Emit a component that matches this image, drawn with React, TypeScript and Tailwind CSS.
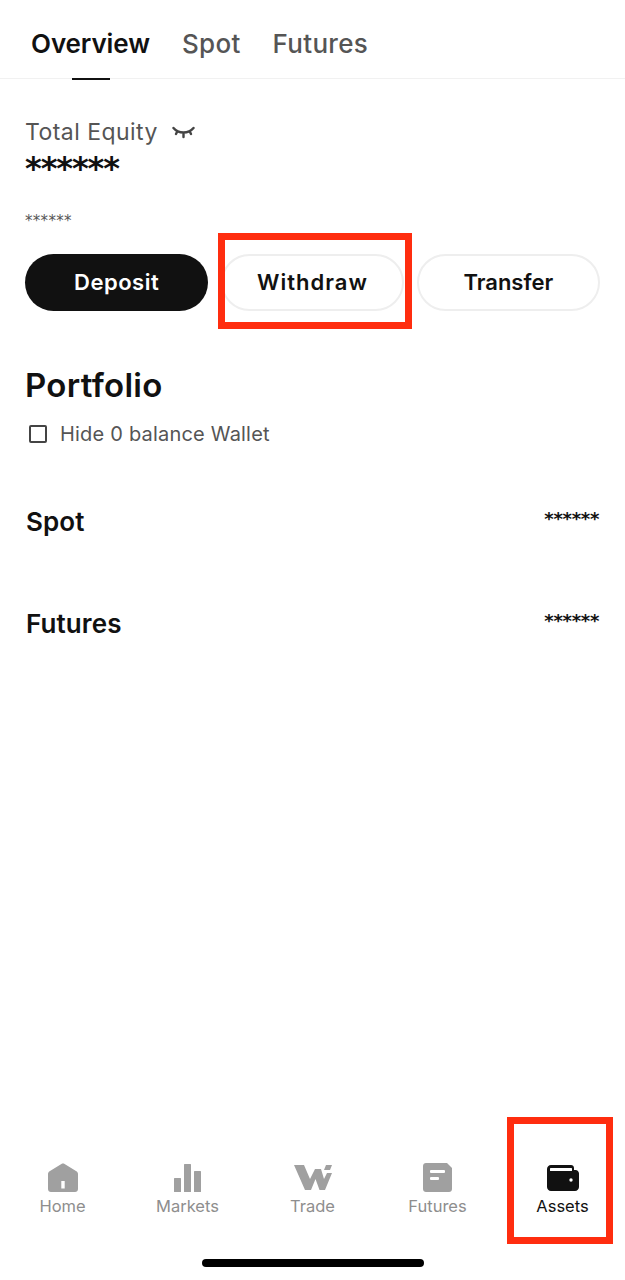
const tabs = ['Overview', 'Spot', 'Futures'];

const wallets = ['Spot', 'Futures'];

function HomeIcon() {
  return (
    <svg width="30" height="29" viewBox="0 0 30 29" fill="#a0a0a0">
      <path fillRule="evenodd" d="M13.4 1 1.6 8.2C.6 8.8 0 9.8 0 11v15c0 1.7 1.3 3 3 3h24c1.700 0 3-1.300 3-3V11c0-1.200-.6-2.200-1.600-2.800L16.600 1c-1-.6-2.200-.6-3.200 0ZM13.300 18h3.400v7.500h-3.400V18Z" />
    </svg>
  );
}

function MarketsIcon() {
  return (
    <svg width="27" height="28" viewBox="0 0 27 28" fill="#a0a0a0">
      <rect x="0" y="14" width="7" height="14" rx="0.5" />
      <rect x="10" y="0" width="7" height="28" rx="0.5" />
      <rect x="20" y="7" width="7" height="21" rx="0.5" />
    </svg>
  );
}

function TradeIcon() {
  return (
    <svg width="38" height="25" viewBox="0 0 38 25" fill="#a0a0a0">
      <path d="M0 0h10l6 14 5-10h6l3 10 3-6h5l-7 17h-5.500l-4-11L17 25h-6L0 0Z" />
      <path d="M32 0h6l-2 5h-6l2-5Z" />
    </svg>
  );
}

function FuturesIcon() {
  return (
    <svg width="29" height="29" viewBox="0 0 29 29">
      <path d="M3 0h21l5 5v21c0 1.700-1.300 3-3 3H3c-1.700 0-3-1.300-3-3V3c0-1.700 1.300-3 3-3Z" fill="#a0a0a0" />
      <rect x="7" y="7" width="15" height="3" rx="1" fill="#fff" />
      <rect x="7" y="14" width="9" height="3" rx="1" fill="#fff" />
    </svg>
  );
}

function WalletIcon() {
  return (
    <svg width="32" height="26" viewBox="0 0 32 26">
      <path d="M4 0h20c1.700 0 3 1.300 3 3v2h1.500c1.900 0 3.500 1.600 3.500 3.500V22c0 2.200-1.800 4-4 4H4c-2.200 0-4-1.800-4-4V4c0-2.200 1.800-4 4-4Z" fill="#111" />
      <rect x="3" y="3" width="22" height="3" rx="0.5" fill="#fff" />
      <circle cx="24" cy="15" r="1.700" fill="#fff" />
    </svg>
  );
}

const navItems = [
  { label: 'Home', icon: <HomeIcon /> },
  { label: 'Markets', icon: <MarketsIcon /> },
  { label: 'Trade', icon: <TradeIcon /> },
  { label: 'Futures', icon: <FuturesIcon /> },
  { label: 'Assets', icon: <WalletIcon />, active: true },
];

export default function App() {
  return (
    <div className="relative flex h-[1280px] w-full flex-col overflow-hidden bg-white font-['Inter',sans-serif] text-[#111]">
      <header className="flex h-[79px] items-start gap-[32px] border-b border-[#f1f1f1] pl-[31px] pt-[27px]">
        {tabs.map((tab, i) => (
          <div key={tab} className="relative h-[52px]">
            <span className={`block text-[26px] leading-[34px] ${i === 0 ? 'font-semibold tracking-[-0.100px] text-[#111]' : 'font-medium tracking-[0.3px] text-[#555]'}`}>
              {tab}
            </span>
            {i === 0 && <div className="absolute bottom-[-1px] left-[41px] h-[2px] w-[38px] bg-[#111]" />}
          </div>
        ))}
      </header>

      <main className="flex-1 px-[25px]">
        <div className="mt-[38px] flex items-center gap-[14px]">
          <span className="text-[23px] leading-[30px] tracking-[0.45px] text-[#555]">Total Equity</span>
          <svg width="23" height="13" viewBox="0 0 23 13" fill="none" stroke="#444" strokeWidth="2.400" strokeLinecap="round">
            <path d="M1.500 2c5 6 15 6 20 0" />
            <path d="M5 6 4 8M11.500 8v3M18 6l1 2" />
          </svg>
        </div>
        <p className="mt-[3px] font-['DejaVu_Sans',sans-serif] text-[32px] font-bold leading-[36px] tracking-[-1.100px] text-[#111]">******</p>
        <p className="mt-[23px] font-['DejaVu_Sans',sans-serif] text-[15px] leading-[24px] tracking-[0.300px] text-[#555]">******</p>

        <div className="mt-[21px] grid grid-cols-3 gap-[12.500px]">
          <button className="h-[57px] rounded-full bg-[#111] text-[22px] font-semibold tracking-[0.5px] text-white">Deposit</button>
          <button className="h-[57px] rounded-full border-2 border-[#eeeeee] text-[22px] font-semibold tracking-[1px]">Withdraw</button>
          <button className="h-[57px] rounded-full border-2 border-[#eeeeee] text-[22px] font-semibold">Transfer</button>
        </div>

        <h2 className="mt-[54px] text-[33px] font-semibold leading-[40px] tracking-[0.300px]">Portfolio</h2>

        <label className="mt-[15px] flex items-center gap-[13px] pl-[4px]">
          <span className="h-[18px] w-[18px] rounded-[2px] border-2 border-[#444]" />
          <span className="text-[20px] leading-[28px] tracking-[0.2px] text-[#555]">Hide 0 balance Wallet</span>
        </label>

        <div className="mt-[57px] flex flex-col gap-[68px]">
          {wallets.map((name) => (
            <div key={name} className="flex h-[34px] items-start justify-between">
              <span className="pl-[1px] text-[26px] font-semibold leading-[34px] tracking-[0.100px]">{name}</span>
              <span className="pr-[1px] pt-[2px] font-['DejaVu_Sans',sans-serif] text-[18px] font-bold leading-[24px] tracking-[-0.300px]">******</span>
            </div>
          ))}
        </div>
      </main>

      <nav className="grid h-[60px] grid-cols-5">
        {navItems.map((item) => (
          <div key={item.label} className="flex flex-col items-center">
            <div className="flex h-[29px] items-center justify-center">{item.icon}</div>
            <span className={`mt-[1px] text-[16.500px] leading-[26px] ${item.active ? 'text-[#111]' : 'text-[#8e8e8e]'}`}>
              {item.label}
            </span>
          </div>
        ))}
      </nav>

      <div className="flex h-[57px] justify-center pt-[36px]">
        <div className="h-[8px] w-[222px] rounded-full bg-black" />
      </div>

      {/* annotation boxes from the screenshot */}
      <div className="absolute left-[218px] top-[233px] h-[96px] w-[194px] border-[7px] border-[#ff2d0f]" />
      <div className="absolute left-[507px] top-[1117px] h-[127px] w-[106px] border-[7px] border-[#ff2d0f]" />
    </div>
  );
}
